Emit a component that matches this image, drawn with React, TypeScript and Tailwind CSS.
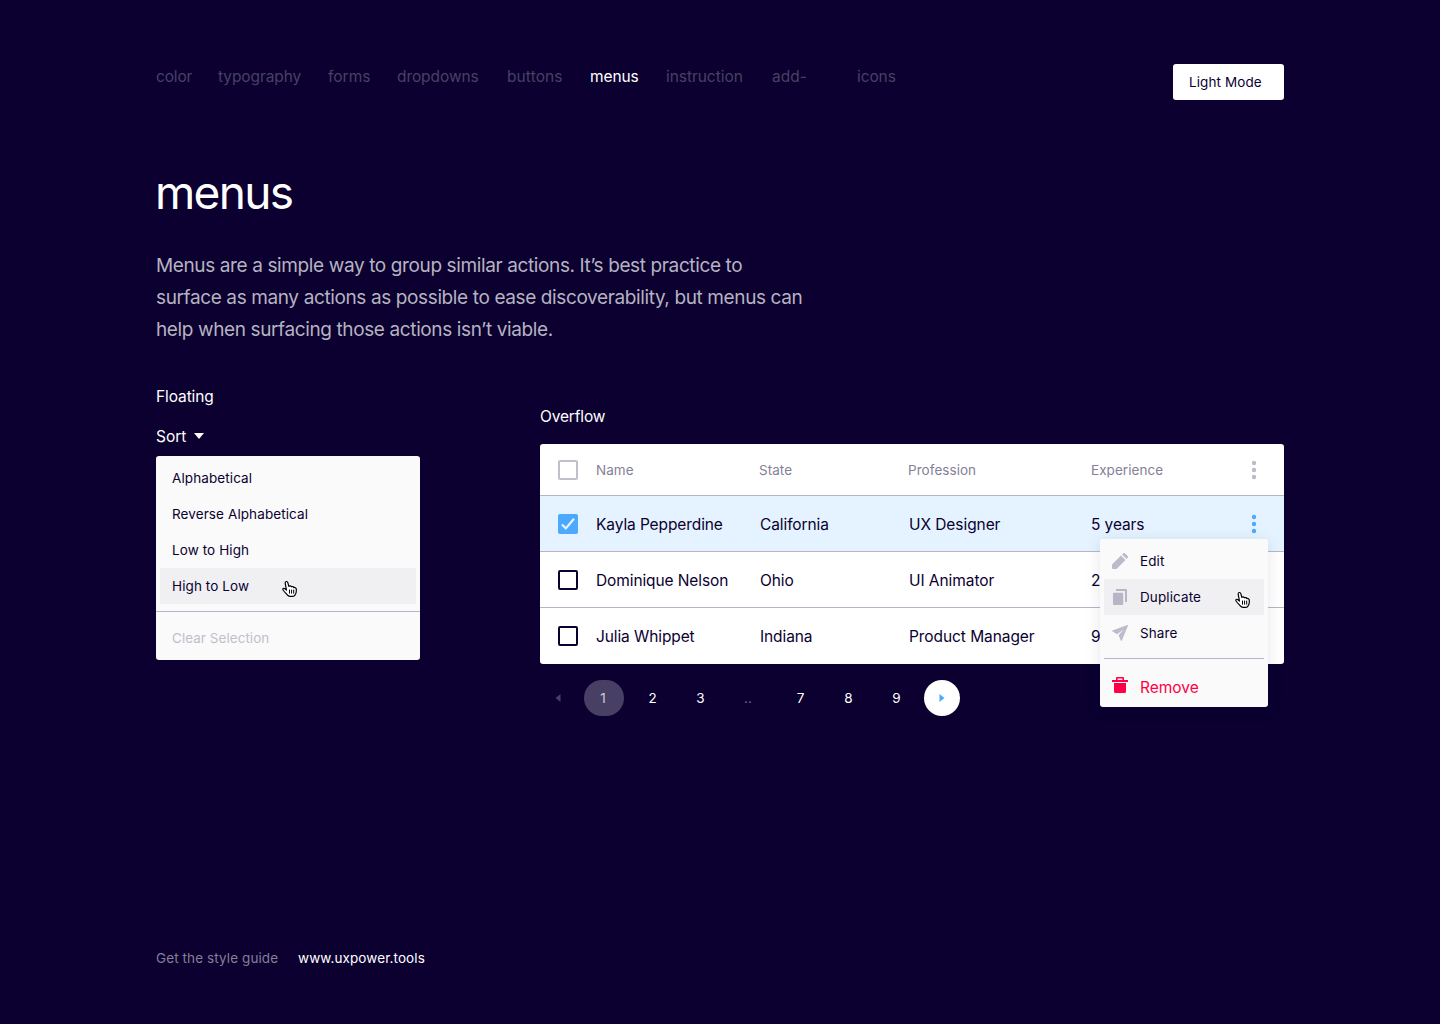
import type { ReactNode } from "react";

const navItems = [
  { label: "color", width: "w-[62px]", track: "tracking-[-0.15px]" },
  { label: "typography", width: "w-[110px]", track: "tracking-[-0.08px]" },
  { label: "forms", width: "w-[69px]", track: "tracking-[0px]" },
  { label: "dropdowns", width: "w-[110px]", track: "tracking-[-0.08px]" },
  { label: "buttons", width: "w-[83px]", track: "tracking-[0.1px]" },
  { label: "menus", width: "w-[76px]", track: "tracking-[-0.1px]", active: true },
  { label: "instruction", width: "w-[106px]", track: "tracking-[-0.05px]" },
  { label: "add-", width: "w-[85px]", track: "tracking-[0px]" },
  { label: "icons", width: "w-[60px]", track: "tracking-[-0.1px]" },
];

const people = [
  { name: "Kayla Pepperdine", state: "California", job: "UX Designer", years: "5 years", checked: true },
  { name: "Dominique Nelson", state: "Ohio", job: "UI Animator", years: "2", checked: false },
  { name: "Julia Whippet", state: "Indiana", job: "Product Manager", years: "9", checked: false },
];

const columns = "grid grid-cols-[56px_164px_148px_183px_193px] items-center";

function HandCursor() {
  return (
    <svg width="17" height="18" viewBox="0 0 17 18" className="block">
      <path
        d="M5.500 10.200 4.200 3.300C3.900 1.200 6.400.800 6.900 2.800L7.800 6.300c.6-.7 2.300-.5 2.600.5.700-.6 2.200-.2 2.400.8.900-.4 2.400.1 2.500 1.500.1 1.500.1 2.800-.3 4-.3.800-.8 1.300-1 1.900-.4 1-1.200 1.300-2.300 1.300H9c-1.200 0-2-.4-2.700-1.400C5.400 13.600 4 12.600 2.400 10.500.9 8.400 2.800 7.600 4.300 9z"
        fill="#fff"
        stroke="#000"
        strokeWidth="1.200"
        strokeLinejoin="round"
      />
      <path d="M8.500 9.600v4M10.600 9.600v4M12.700 9.600v4" stroke="#000" strokeWidth="1" fill="none" />
    </svg>
  );
}

function EditIcon() {
  return (
    <svg width="16" height="16" viewBox="0 0 16 16" fill="#bebacb">
      <path d="M0 11.600V15.200q0 .8.8.8H4.500L13.500 7 9 2.500z" />
      <path d="M10 1.500 11 .5q1.100-1 2.200 0L15.500 2.800q1 1.100 0 2.200L14.500 6z" />
    </svg>
  );
}

function DuplicateIcon() {
  return (
    <svg width="16" height="16" viewBox="0 0 16 16" fill="#b9b4c6">
      <path d="M4 0h10q1 0 1 1v12h-2V2H4z" />
      <rect x="1" y="3.800" width="10.200" height="12.200" rx="0.800" />
    </svg>
  );
}

function ShareIcon() {
  return (
    <svg width="16" height="16" viewBox="0 0 16 16" fill="#bebacb">
      <path d="M15.400 0 .4 5.400c-.5.2-.5.700-.1.900L5 9.300 11.700 4.600 6.600 10.300 8.800 15.600c.2.500.900.500 1.100 0L16 .6c.1-.4-.2-.7-.6-.6z" />
    </svg>
  );
}

function TrashIcon() {
  return (
    <svg width="16" height="16" viewBox="0 0 16 16" fill="#ff0046">
      <path d="M4 3V1q0-1 1-1h6q1 0 1 1v2h4v2H0V3zM5.600 3h4.800V1.500H5.600z" />
      <path d="M2 6h12v8.500q0 1.500-1.500 1.500h-9Q2 16 2 14.500z" />
    </svg>
  );
}

function Dots({ color }: { color: string }) {
  return (
    <svg width="6" height="20" viewBox="0 0 6 20" fill={color} className="block">
      <circle cx="3" cy="3" r="2.200" />
      <circle cx="3" cy="10" r="2.200" />
      <circle cx="3" cy="17" r="2.200" />
    </svg>
  );
}

function Checkbox({ checked, muted }: { checked?: boolean; muted?: boolean }) {
  if (checked) {
    return (
      <span className="ml-[18px] flex size-5 items-center justify-center rounded-[2px] bg-[#4da8ff]">
        <svg width="20" height="20" viewBox="0 0 20 20" fill="none">
          <path d="M3.900 10.500 7.800 14.400 16 4.800" stroke="#e4f3ff" strokeWidth="2.200" />
        </svg>
      </span>
    );
  }
  return (
    <span
      className={`ml-[18px] block size-5 rounded-[2px] border-2 bg-white ${muted ? "border-[#c2bfcc]" : "border-[#0b0030]"}`}
    />
  );
}

function MenuRow({ icon, children, hover }: { icon: ReactNode; children: ReactNode; hover?: boolean }) {
  return (
    <div className={`relative mx-1 flex h-9 items-center pl-2 ${hover ? "bg-[#f0f0f3]" : ""}`}>
      {icon}
      <span className="ml-3 text-[13.5px] tracking-[0.1px]">{children}</span>
      {hover && (
        <span className="absolute left-[130px] top-[12px]">
          <HandCursor />
        </span>
      )}
    </div>
  );
}

function PageNumber({ children, current, faded }: { children: ReactNode; current?: boolean; faded?: boolean }) {
  return (
    <span
      className={`flex h-9 w-10 items-center justify-center rounded-[18px] text-[13.5px] ${
        current ? "bg-[#484064] pr-0.5 text-[#cecbd6]" : faded ? "text-[#6d6683]" : "pl-px text-white"
      }`}
    >
      {children}
    </span>
  );
}

export default function App() {
  return (
    <div className="flex h-[1024px] w-[1440px] flex-col overflow-hidden bg-[#0b0030] px-[156px] pt-16 font-['Inter',sans-serif] text-[15.5px] text-white">
      <header className="flex h-9 items-start justify-between">
        <nav className="flex h-[26px] items-center">
          {navItems.map((item) => (
            <a key={item.label} className={`${item.width} ${item.track} ${item.active ? "text-white" : "text-[#484064]"}`}>
              {item.label}
            </a>
          ))}
        </nav>
        <button className="flex h-9 w-[111px] items-center rounded-[3px] bg-white pl-4 text-[13.5px] tracking-[0.1px] text-[#0b0030]">
          Light Mode
        </button>
      </header>

      <h1 className="-ml-px mt-[60px] h-16 text-[46px] leading-[64px] tracking-[-1.7px]">menus</h1>
      <p className="mt-[26px] text-[19px] leading-8 tracking-[-0.38px] text-[#b6b3c1]">
        Menus are a simple way to group similar actions. It’s best practice to
        <br />
        surface as many actions as possible to ease discoverability, but menus can
        <br />
        help when surfacing those actions isn’t viable.
      </p>

      <main className="mt-[38px] flex items-start">
        <section className="w-[264px]">
          <h2 className="h-6 pt-px leading-6 tracking-[-0.1px]">Floating</h2>
          <div className="mt-4 flex h-6 items-center">
            <span className="pt-0.5">Sort</span>
            <svg width="10" height="6" viewBox="0 0 10 6" fill="#fff" className="ml-2">
              <path d="M0 0h10L5 6z" />
            </svg>
          </div>
          <div className="mt-2 h-[204px] rounded-[3px] bg-[#fafafa] pt-1 text-[13.5px] tracking-[0.1px] text-[#0b0030]">
            <div className="mx-1 flex h-9 items-center pl-3">Alphabetical</div>
            <div className="mx-1 flex h-9 items-center pl-3">Reverse Alphabetical</div>
            <div className="mx-1 flex h-9 items-center pl-3">Low to High</div>
            <div className="relative mx-1 flex h-9 items-center bg-[#f0f0f3] pl-3">
              High to Low
              <span className="absolute left-[121px] top-[12px]">
                <HandCursor />
              </span>
            </div>
            <div className="mt-[7px] h-px bg-[#b8b4c4]" />
            <div className="mt-2 flex h-9 items-center pl-4 tracking-[0.04px] text-[#c2bfcc]">Clear Selection</div>
          </div>
        </section>

        <section className="ml-[120px] mt-5 w-[744px]">
          <h2 className="h-6 pt-px leading-6 tracking-[-0.15px]">Overflow</h2>
          <div className="relative mt-4">
            <div className="overflow-hidden rounded-[3px] bg-white text-[#0b0030]">
              <div className={`${columns} h-[52px] border-b border-[#b8b4c4] text-[13.5px] tracking-[0.05px] text-[#857f97]`}>
                <Checkbox muted />
                <span className="pt-px">Name</span>
                <span className="-ml-px pt-px">State</span>
                <span className="pt-px">Profession</span>
                <div className="flex items-center justify-between pr-[27px]">
                  <span className="pt-px">Experience</span>
                  <Dots color="#bebacb" />
                </div>
              </div>
              {people.map((p) => (
                <div
                  key={p.name}
                  className={`${columns} h-14 border-b border-[#b8b4c4] tracking-[-0.1px] last:border-transparent ${p.checked ? "bg-[#e4f3ff]" : ""}`}
                >
                  <Checkbox checked={p.checked} />
                  <span className="pt-0.5">{p.name}</span>
                  <span className="pt-0.5">{p.state}</span>
                  <span className="pl-px pt-0.5 tracking-[-0.07px]">{p.job}</span>
                  <div className="flex items-center justify-between pr-[27px]">
                    <span className="pt-0.5">{p.years}</span>
                    {p.checked && <Dots color="#4da8ff" />}
                  </div>
                </div>
              ))}
            </div>

            <div className="absolute left-[560px] top-[95px] h-[168px] w-[168px] rounded-[3px] bg-[#fafafa] pt-1 text-[#0b0030] shadow-[0_2px_16px_rgba(11,0,48,0.1)]">
              <MenuRow icon={<EditIcon />}>Edit</MenuRow>
              <MenuRow icon={<DuplicateIcon />} hover>
                Duplicate
              </MenuRow>
              <MenuRow icon={<ShareIcon />}>Share</MenuRow>
              <div className="mx-1 mt-[7px] h-px bg-[#b8b4c4]" />
              <div className="mt-[10px] flex h-9 items-center pl-3 text-[#ff0046]">
                <span className="-mt-1">
                  <TrashIcon />
                </span>
                <span className="ml-3 pt-0.5">Remove</span>
              </div>
            </div>
          </div>

          <div className="mt-4 flex items-center gap-2">
            <span className="flex h-9 w-9 items-center justify-center">
              <svg width="6" height="8" viewBox="0 0 6 8" fill="#484064">
                <path d="M5.500 0v8L.5 4z" />
              </svg>
            </span>
            <PageNumber current>1</PageNumber>
            <PageNumber>2</PageNumber>
            <PageNumber>3</PageNumber>
            <PageNumber faded>..</PageNumber>
            <span className="ml-1 flex gap-2">
              <PageNumber>7</PageNumber>
              <PageNumber>8</PageNumber>
              <PageNumber>9</PageNumber>
            </span>
            <span className="flex size-9 items-center justify-center rounded-full bg-white">
              <svg width="6" height="8" viewBox="0 0 6 8" fill="#4da8ff">
                <path d="M.5 0v8l5-4z" />
              </svg>
            </span>
          </div>
        </section>
      </main>

      <footer className="mb-14 mt-auto flex h-5 items-center text-[13.5px] tracking-[0.1px]">
        <span className="w-[142px] text-[#857f97]">Get the style guide</span>
        <a>www.uxpower.tools</a>
      </footer>
    </div>
  );
}
